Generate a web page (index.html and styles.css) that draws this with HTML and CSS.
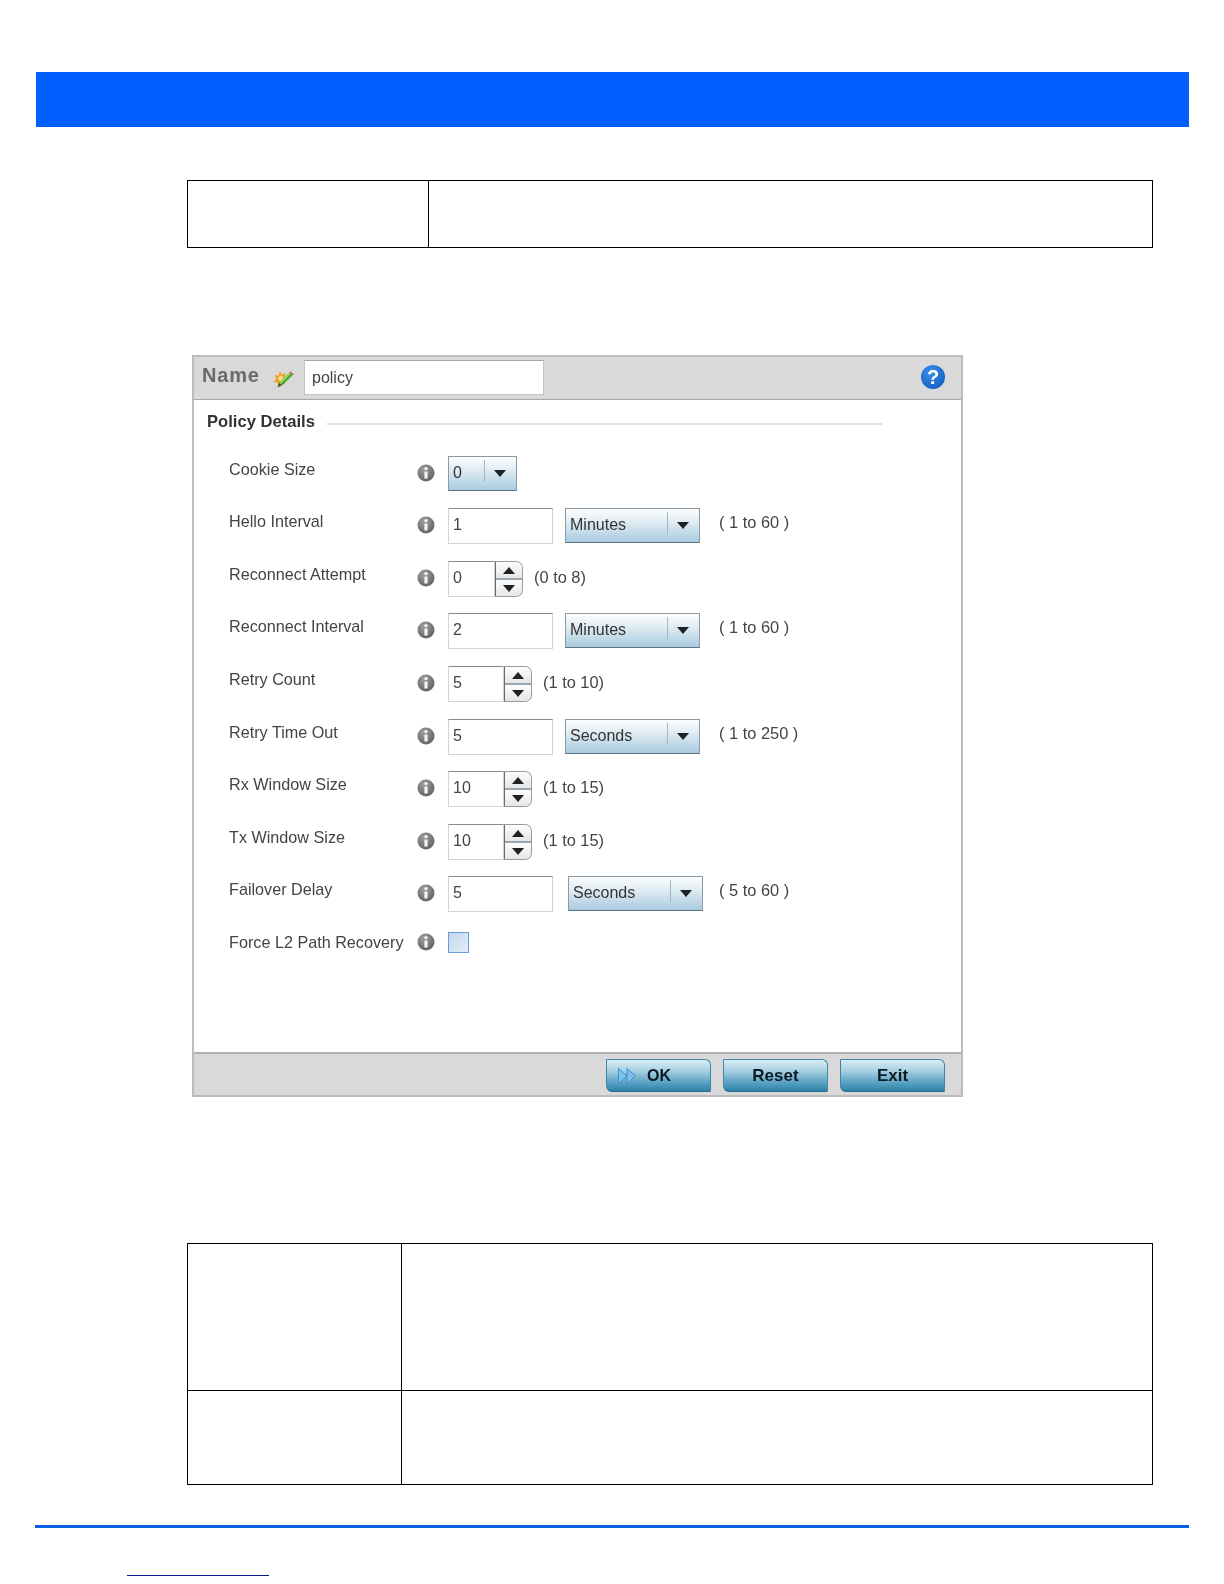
FILE: index.html
```html
<!DOCTYPE html>
<html lang="en">
<head>
<meta charset="utf-8">
<title>Policy Details</title>
<link rel="stylesheet" href="styles.css">
</head>
<body>
<div class="banner"></div>

<table class="doc-table top-table">
  <tr><td class="cell-a"></td><td></td></tr>
</table>

<section class="dialog">
  <header class="name-bar">
    <span class="name-label">Name</span>
    <svg class="edit-icon" width="22" height="22" viewBox="0 0 22 22">
      <path d="M8 3l1.700 3.500L13.500 5l-.8 3.900L16.500 11l-3.800 1.500.5 4.500-3.700-2.400L6.500 19l-.9-4.600L1.500 14l3-3.200L2.500 7l4 .7z" fill="#f0a023"/>
      <path d="M8 7.500l2.500.5.5 3-3 2-2-2.500z" fill="#fbdc95"/>
      <path d="M17.500 4.500l3 2.800L10 17.500l-3-2.800z" fill="#4ea62b"/>
      <path d="M17.500 4.500l1.400 1.300L8.400 16l-1.400-1.300z" fill="#93d863"/>
      <path d="M7 14.700l3 2.800-4.500 1.700z" fill="#5c4632"/>
      <path d="M17.500 4.500l1-1 3 2.800-1 1z" fill="#b9524a"/>
    </svg>
    <div class="field name-field">policy</div>
    <span class="help-icon">?</span>
  </header>

  <div class="dialog-body">
    <div class="section-title">
      <span class="section-name">Policy Details</span>
      <span class="section-rule"></span>
    </div>

    <div class="form-row">
      <span class="row-label">Cookie Size</span>
      <svg class="info" viewBox="0 0 18 18"><use href="#info-mark"/></svg>
      <div class="select select-short"><span class="select-text">0</span><span class="select-arrow"></span></div>
    </div>

    <div class="form-row">
      <span class="row-label">Hello Interval</span>
      <svg class="info" viewBox="0 0 18 18"><use href="#info-mark"/></svg>
      <div class="field field-wide">1</div>
      <div class="select select-unit"><span class="select-text">Minutes</span><span class="select-arrow"></span></div>
      <span class="range range-unit">( 1 to 60 )</span>
    </div>

    <div class="form-row">
      <span class="row-label">Reconnect Attempt</span>
      <svg class="info" viewBox="0 0 18 18"><use href="#info-mark"/></svg>
      <div class="field field-spin-s">0</div>
      <div class="spinner"><span class="spin-up"></span><span class="spin-down"></span></div>
      <span class="range range-spin">(0 to 8)</span>
    </div>

    <div class="form-row">
      <span class="row-label">Reconnect Interval</span>
      <svg class="info" viewBox="0 0 18 18"><use href="#info-mark"/></svg>
      <div class="field field-wide">2</div>
      <div class="select select-unit"><span class="select-text">Minutes</span><span class="select-arrow"></span></div>
      <span class="range range-unit">( 1 to 60 )</span>
    </div>

    <div class="form-row">
      <span class="row-label">Retry Count</span>
      <svg class="info" viewBox="0 0 18 18"><use href="#info-mark"/></svg>
      <div class="field field-spin">5</div>
      <div class="spinner"><span class="spin-up"></span><span class="spin-down"></span></div>
      <span class="range range-spin">(1 to 10)</span>
    </div>

    <div class="form-row">
      <span class="row-label">Retry Time Out</span>
      <svg class="info" viewBox="0 0 18 18"><use href="#info-mark"/></svg>
      <div class="field field-wide">5</div>
      <div class="select select-unit"><span class="select-text">Seconds</span><span class="select-arrow"></span></div>
      <span class="range range-unit">( 1 to 250 )</span>
    </div>

    <div class="form-row">
      <span class="row-label">Rx Window Size</span>
      <svg class="info" viewBox="0 0 18 18"><use href="#info-mark"/></svg>
      <div class="field field-spin">10</div>
      <div class="spinner"><span class="spin-up"></span><span class="spin-down"></span></div>
      <span class="range range-spin">(1 to 15)</span>
    </div>

    <div class="form-row">
      <span class="row-label">Tx Window Size</span>
      <svg class="info" viewBox="0 0 18 18"><use href="#info-mark"/></svg>
      <div class="field field-spin">10</div>
      <div class="spinner"><span class="spin-up"></span><span class="spin-down"></span></div>
      <span class="range range-spin">(1 to 15)</span>
    </div>

    <div class="form-row">
      <span class="row-label">Failover Delay</span>
      <svg class="info" viewBox="0 0 18 18"><use href="#info-mark"/></svg>
      <div class="field field-wide">5</div>
      <div class="select select-unit select-far"><span class="select-text">Seconds</span><span class="select-arrow"></span></div>
      <span class="range range-far">( 5 to 60 )</span>
    </div>

    <div class="form-row form-row-check">
      <span class="row-label">Force L2 Path Recovery</span>
      <svg class="info" viewBox="0 0 18 18"><use href="#info-mark"/></svg>
      <div class="checkbox"></div>
    </div>
  </div>

  <footer class="button-bar">
    <div class="btn btn-ok">
      <svg class="ok-icon" width="20" height="18" viewBox="0 0 20 18">
        <path d="M1.500 1.500L10 9 1.500 16.500z" fill="#7cc0ec" stroke="#3d8fd0"/>
        <path d="M10 1.500L18.500 9 10 16.500z" fill="#7cc0ec" stroke="#3d8fd0"/>
      </svg>
      <span>OK</span>
    </div>
    <div class="btn">Reset</div>
    <div class="btn">Exit</div>
  </footer>
</section>

<table class="doc-table bottom-table">
  <tr class="row-tall"><td class="cell-b"></td><td></td></tr>
  <tr class="row-short"><td class="cell-b"></td><td></td></tr>
</table>

<div class="footer-rule"></div>
<div class="footer-link"></div>

<svg class="sprite" width="0" height="0" aria-hidden="true">
  <defs>
    <radialGradient id="info-fill" cx="40%" cy="30%" r="75%">
      <stop offset="0" stop-color="#a0a0a0"/>
      <stop offset="1" stop-color="#5f5f5f"/>
    </radialGradient>
    <g id="info-mark">
      <circle cx="9" cy="9" r="8.500" fill="url(#info-fill)"/>
      <circle cx="9" cy="4.600" r="1.700" fill="#f4f4f4"/>
      <rect x="7.400" y="7.400" width="3.200" height="7.200" rx="0.500" fill="#f4f4f4"/>
    </g>
  </defs>
</svg>
</body>
</html>
```
FILE: styles.css
```css
html, body {
  margin: 0;
  padding: 0;
  background: #fff;
}

body {
  font-family: "Liberation Sans", Arial, sans-serif;
  height: 1584px;
  overflow: hidden;
}

.banner {
  height: 55px;
  width: 1153px;
  margin: 72px 0 0 36px;
  background: #0060ff;
}

.doc-table {
  border-collapse: collapse;
  width: 966px;
  margin-left: 187px;
  table-layout: fixed;
}

.doc-table td {
  border: 1px solid #000;
  padding: 0;
}

.top-table {
  margin-top: 53px;
  height: 68px;
}

.cell-a { width: 240px; }
.cell-b { width: 213px; }

.bottom-table { margin-top: 146px; }
.row-tall { height: 147px; }
.row-short { height: 94px; }

.dialog {
  box-sizing: border-box;
  width: 771px;
  height: 742px;
  margin: 107px 0 0 192px;
  border: 2px solid #bcbcbc;
  display: flex;
  flex-direction: column;
  filter: blur(0.35px);
}

.name-bar {
  height: 42px;
  box-sizing: content-box;
  flex: none;
  display: flex;
  align-items: center;
  background: #d9d9d9;
  border-bottom: 1px solid #a8a8a8;
  padding: 0 16px 0 8px;
}

.name-label {
  font-size: 20px;
  font-weight: bold;
  color: #6a6a6a;
  width: 70px;
  letter-spacing: 0.8px;
  position: relative;
  top: -3px;
}

.edit-icon {
  flex: none;
  margin: 2px 0 0 0;
}

.field {
  box-sizing: border-box;
  height: 36px;
  background: #fff;
  border: 1px solid #d4d4d4;
  border-top-color: #8a8a8a;
  font-size: 16px;
  line-height: 32px;
  color: #444;
  padding-left: 4px;
  flex: none;
}

.name-field {
  width: 240px;
  height: 35px;
  margin: -1px 0 0 10px;
  padding-left: 7px;
  line-height: 34px;
  border-color: #c4c4c4;
  border-top-color: #a6a6a6;
}

.help-icon {
  margin: -2px 0 0 auto;
  width: 24px;
  height: 24px;
  border-radius: 50%;
  background: radial-gradient(circle at 40% 30%, #3b8ee8, #0a55bd);
  color: #fff;
  font-size: 20px;
  font-weight: bold;
  line-height: 24px;
  text-align: center;
}

.dialog-body {
  flex: 1;
  padding-left: 35px;
  background: #fff;
}

.section-title {
  height: 55.800px;
  margin-left: -22px;
  display: flex;
  align-items: flex-start;
  padding-top: 12px;
  box-sizing: border-box;
}

.section-name {
  font-size: 16.600px;
  font-weight: bold;
  color: #333;
  line-height: 20px;
  width: 120px;
}

.section-rule {
  width: 555px;
  height: 2px;
  margin-top: 11px;
  background: #dbe2e2;
}

.form-row {
  height: 52.550px;
  display: flex;
  align-items: flex-start;
}

.row-label {
  flex: none;
  width: 188px;
  padding-top: 4px;
  font-size: 16.200px;
  line-height: 18px;
  color: #444;
  white-space: nowrap;
}

.info {
  flex: none;
  width: 18px;
  height: 18px;
  margin: 8px 13px 0 0;
}

.form-row-check .info { margin-top: 4px; }

.field-wide { width: 105px; }
.field-spin { width: 56px; }
.field-spin-s { width: 47px; }

.select {
  box-sizing: border-box;
  flex: none;
  height: 35px;
  display: flex;
  align-items: center;
  border: 1px solid #8e9aa2;
  border-bottom-color: #5f7483;
  background: linear-gradient(#fbfdfe 0%, #e3eef4 35%, #a9cbdf 100%);
  font-size: 16px;
  color: #333;
  position: relative;
}

.select-text { padding: 0 0 1px 4px; }

.select-arrow {
  position: absolute;
  right: 10px;
  top: 13px;
  width: 0;
  height: 0;
  border-left: 6px solid transparent;
  border-right: 6px solid transparent;
  border-top: 7px solid #1d2226;
}

.select::after {
  content: "";
  position: absolute;
  right: 31px;
  top: 3px;
  bottom: 8px;
  width: 1px;
  background: #a9b5bc;
}

.select-short { width: 69px; }
.select-unit { width: 135px; margin-left: 12px; }
.select-far { margin-left: 15px; }

.range {
  flex: none;
  font-size: 16.400px;
  line-height: 18px;
  color: #444;
  white-space: nowrap;
  padding-top: 5px;
}

.range-unit { margin-left: 19px; }
.range-far { margin-left: 16px; }
.range-spin { margin-left: 11px; padding-top: 7px; }

.spinner {
  box-sizing: border-box;
  flex: none;
  width: 28px;
  height: 36px;
  display: flex;
  flex-direction: column;
  border: 1px solid #9a9a9a;
  border-left-color: #6a6a6a;
  border-radius: 0 7px 7px 0;
  background: #e6e6e6;
  overflow: hidden;
}

.spin-up,
.spin-down {
  flex: 1;
  position: relative;
  background: linear-gradient(#fdfdfd, #e6e6e6);
}

.spin-up { border-bottom: 2px solid #9aa6ad; }

.spin-up::after,
.spin-down::after {
  content: "";
  position: absolute;
  left: 7px;
  top: 5px;
  width: 0;
  height: 0;
  border-left: 6px solid transparent;
  border-right: 6px solid transparent;
}

.spin-up::after { border-bottom: 7px solid #1d2226; }
.spin-down::after { border-top: 7px solid #1d2226; }

.checkbox {
  box-sizing: border-box;
  width: 21px;
  height: 21px;
  margin-top: 3px;
  border: 1px solid #6a9fd4;
  background: linear-gradient(135deg, #c3d9ee, #e2edf7);
}

.button-bar {
  flex: none;
  height: 43px;
  box-sizing: border-box;
  display: flex;
  justify-content: flex-end;
  gap: 12px;
  padding: 5px 16px 0 0;
  background: #d9d9d9;
  border-top: 2px solid #b0b0b0;
}

.btn {
  box-sizing: border-box;
  position: relative;
  width: 105px;
  height: 33px;
  display: flex;
  align-items: center;
  justify-content: center;
  border: 1px solid #3f86a8;
  border-bottom-color: #2a6a8a;
  border-radius: 1px 6px 1px 6px;
  background: linear-gradient(#d9edf5 0%, #a7d0e2 35%, #5fa5c5 70%, #2c83aa 100%);
  font-size: 17px;
  font-weight: bold;
  color: #0c1a24;
}

.btn-ok span { margin-left: 1px; font-size: 16px; }

.ok-icon {
  position: absolute;
  left: 10px;
  top: 7px;
}

.footer-rule {
  height: 3px;
  width: 1154px;
  margin: 40px 0 0 35px;
  background: #0a60e0;
}

.footer-link {
  width: 142px;
  height: 1px;
  margin: 47px 0 0 127px;
  background: #0a1a90;
}

.sprite {
  position: absolute;
}
```
